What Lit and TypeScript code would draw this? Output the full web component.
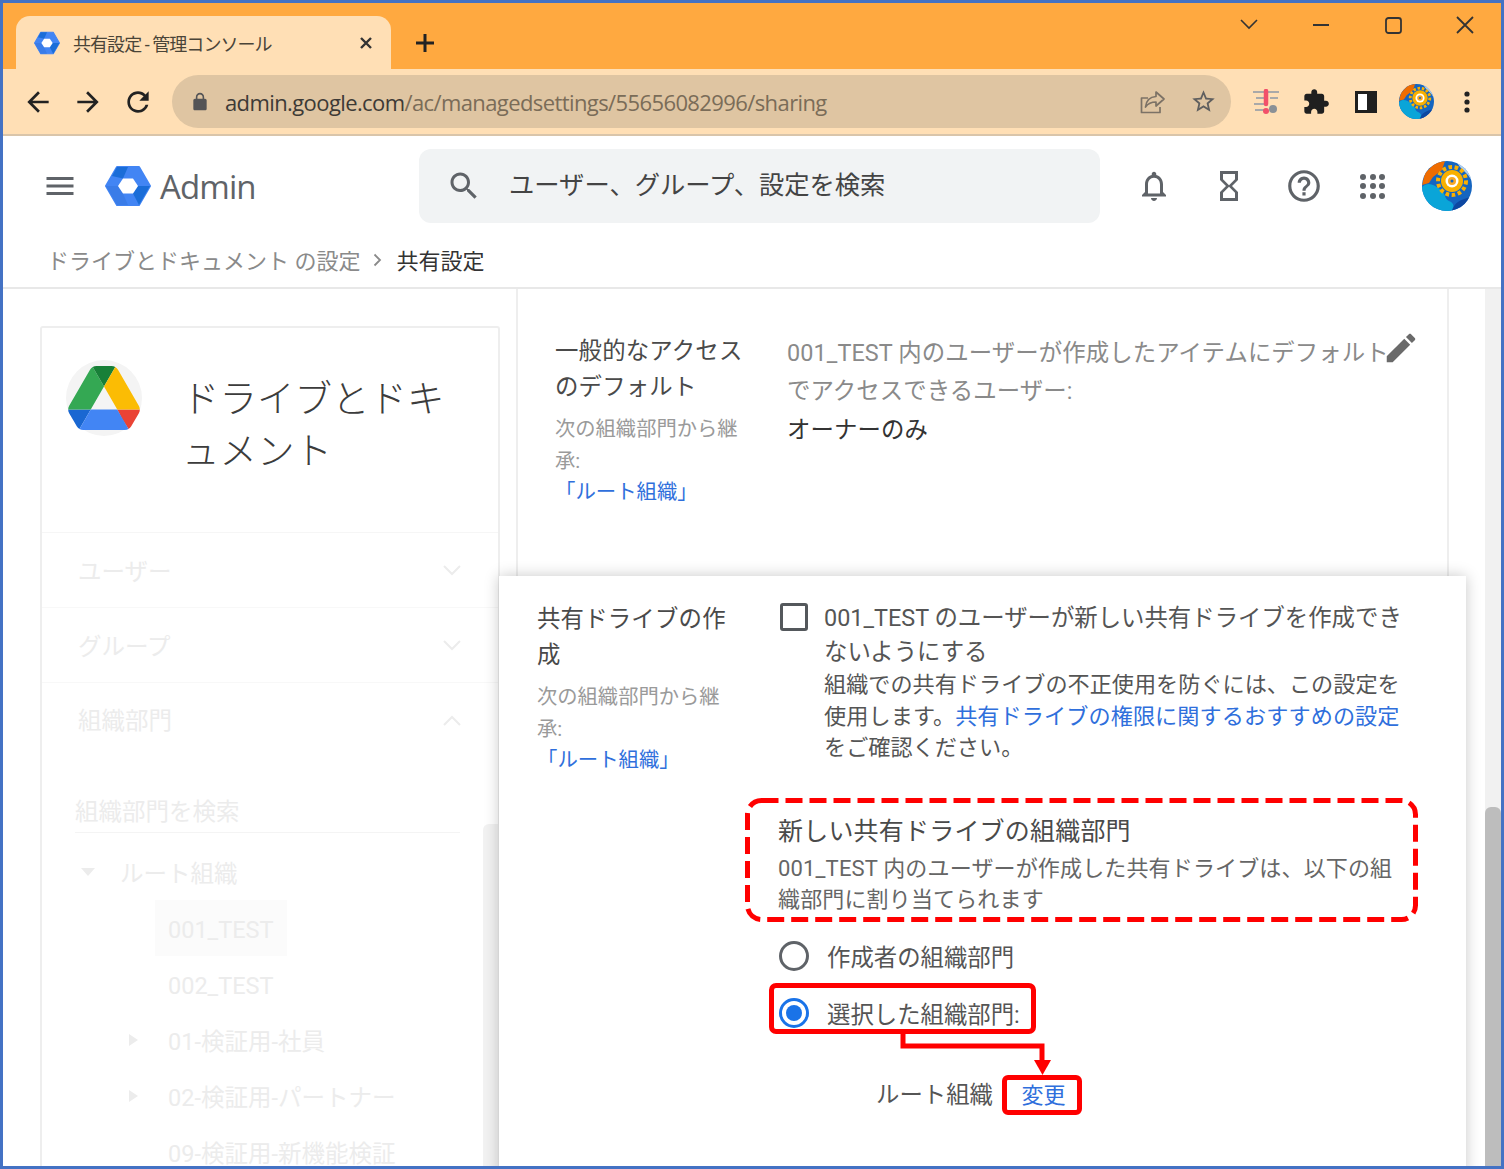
import { LitElement, html, css } from "lit";
import { customElement } from "lit/decorators.js";

const P = {
  back: "M20 11H7.83l5.59-5.59L12 4l-8 8 8 8 1.41-1.41L7.83 13H20v-2z",
  fwd: "M12 4l-1.41 1.41L16.17 11H4v2h12.17l-5.58 5.59L12 20l8-8z",
  reload: "M17.65 6.35C16.2 4.9 14.21 4 12 4c-4.42 0-7.99 3.58-7.99 8s3.57 8 7.99 8c3.73 0 6.84-2.55 7.73-6h-2.08c-.82 2.33-3.04 4-5.65 4-3.31 0-6-2.69-6-6s2.69-6 6-6c1.66 0 3.14.69 4.22 1.78L13 11h7V4l-2.35 2.35z",
  lock: "M18 8h-1V6c0-2.76-2.24-5-5-5S7 3.24 7 6v2H6c-1.1 0-2 .9-2 2v10c0 1.1.9 2 2 2h12c1.1 0 2-.9 2-2V10c0-1.1-.9-2-2-2zm-2.9 0H8.9V6c0-1.71 1.39-3.1 3.1-3.1 1.71 0 3.1 1.39 3.1 3.1v2z",
  star: "M22 9.24l-7.19-.62L12 2 9.19 8.63 2 9.24l5.46 4.73L5.82 21 12 17.27 18.18 21l-1.63-7.03L22 9.24zM12 15.4l-3.76 2.27 1-4.28-3.32-2.88 4.38-.38L12 6.1l1.71 4.04 4.38.38-3.32 2.88 1 4.28L12 15.4z",
  puzzle: "M20.5 11H19V7c0-1.1-.9-2-2-2h-4V3.5C13 2.12 11.88 1 10.5 1S8 2.12 8 3.5V5H4c-1.1 0-1.99.9-1.99 2v3.8H3.5c1.49 0 2.7 1.21 2.7 2.7s-1.21 2.7-2.7 2.7H2V20c0 1.1.9 2 2 2h3.8v-1.5c0-1.49 1.21-2.7 2.7-2.7 1.49 0 2.7 1.21 2.7 2.7V22H17c1.1 0 2-.9 2-2v-4h1.5c1.38 0 2.5-1.12 2.5-2.5S21.88 11 20.5 11z",
  search: "M15.5 14h-.79l-.28-.27C15.41 12.59 16 11.11 16 9.5 16 5.91 13.09 3 9.5 3S3 5.91 3 9.5 5.91 16 9.5 16c1.61 0 3.09-.59 4.23-1.57l.27.28v.79l5 4.99L20.49 19l-4.99-5zm-6 0C7.01 14 5 11.99 5 9.5S7.01 5 9.5 5 14 7.01 14 9.5 11.99 14 9.5 14z",
  bell: "M12 22c1.1 0 2-.9 2-2h-4c0 1.1.9 2 2 2zm6-6v-5c0-3.07-1.63-5.64-4.5-6.32V4c0-.83-.67-1.5-1.5-1.5s-1.5.67-1.5 1.5v.68C7.64 5.36 6 7.92 6 11v5l-2 2v1h16v-1l-2-2zm-2 1H8v-6c0-2.48 1.51-4.5 4-4.5s4 2.02 4 4.5v6z",
  hour: "M6 2v6h.01L6 8.01 10 12l-4 4 .01.01H6V22h12v-5.99h-.01L18 16l-4-4 4-3.99-.01-.01H18V2H6zm10 14.5V20H8v-3.5l4-4 4 4zm-4-5l-4-4V4h8v3.5l-4 4z",
  help: "M11 18h2v-2h-2v2zm1-16C6.48 2 2 6.48 2 12s4.48 10 10 10 10-4.48 10-10S17.52 2 12 2zm0 18c-4.41 0-8-3.59-8-8s3.59-8 8-8 8 3.59 8 8-3.59 8-8 8zm0-14c-2.21 0-4 1.79-4 4h2c0-1.1.9-2 2-2s2 .9 2 2c0 2-3 1.75-3 5h2c0-2.25 3-2.5 3-5 0-2.21-1.79-4-4-4z",
  edit: "M3 17.25V21h3.75L17.81 9.94l-3.75-3.75L3 17.25zM20.71 7.04c.39-.39.39-1.02 0-1.41l-2.34-2.34c-.39-.39-1.02-.39-1.41 0l-1.83 1.83 3.75 3.75 1.83-1.83z",
  menu: "M3 18h18v-2H3v2zm0-5h18v-2H3v2zm0-7v2h18V6H3z",
};

const icon = (d: string, size: number, color: string) => html`<svg width=${size} height=${size} viewBox="0 0 24 24" fill=${color}><path d=${d}></path></svg>`;

const hexagon = (w: number, h: number) => html`<svg width=${w} height=${h} viewBox="0 0 46 42">
  <polygon points="1,21 12,2 34,2 45,21 34,40 12,40" fill="#4285f4" stroke="#4285f4" stroke-width="2" stroke-linejoin="round"></polygon>
  <polygon points="12,2 23,2 18,13.500 7,11" fill="#1a6dd8"></polygon>
  <polygon points="33,21 45,21 34,40 28,28.500" fill="#1a6dd8"></polygon>
  <polygon points="1,21 12,40 23,40 18,28.500 13,21" fill="#3a7ce8"></polygon>
  <polygon points="18,13.500 28,13.500 33,21 28,28.500 18,28.500 13,21" fill="#fff"></polygon>
</svg>`;

const avatar = (s: number) => html`<svg width=${s} height=${s} viewBox="0 0 50 50">
  <defs><clipPath id="av"><circle cx="25" cy="25" r="25"></circle></clipPath></defs>
  <g clip-path="url(#av)">
    <rect width="50" height="50" fill="#1565c0"></rect>
    <path d="M0 26C6 20 12 24 18 28c6 4 4 10 9 12s6 6 2 10H0z" fill="#0aa5d8"></path>
    <path d="M0 24L3 12 14 1l9-1-3 9-9 7-4 6z" fill="#ef6c00"></path>
    <path d="M30 50c2-8 8-12 20-14v14z" fill="#0d47a1"></path>
    <path d="M34 0h16v20l-4-6-8-8z" fill="#e3f2fd" fill-opacity=".75"></path>
  </g>
  <circle cx="30" cy="20" r="14" fill="none" stroke="#fbb000" stroke-width="4" stroke-dasharray="3.6 2.6"></circle>
  <circle cx="30" cy="20" r="11" fill="#f9b000"></circle>
  <circle cx="30" cy="20" r="6.500" fill="#fff"></circle>
  <circle cx="30" cy="20" r="4" fill="#f9a825"></circle>
  <circle cx="30" cy="20" r="1.500" fill="#1565c0"></circle>
</svg>`;

const driveLogo = html`<svg width="72" height="64" viewBox="0 0 87.3 78">
  <path d="m6.6 66.85 3.85 6.65c.8 1.4 1.95 2.5 3.3 3.3l13.75-23.8h-27.5c0 1.55.4 3.1 1.2 4.5z" fill="#1967d2"></path>
  <path d="m43.65 25-13.75-23.8c-1.35.8-2.5 1.9-3.3 3.3l-25.4 44a9.06 9.06 0 0 0 -1.2 4.5h27.5z" fill="#34a853"></path>
  <path d="m73.55 76.8c1.35-.8 2.5-1.9 3.3-3.3l1.6-2.75 7.65-13.25c.8-1.4 1.2-2.95 1.2-4.5h-27.502l5.852 11.5z" fill="#ea4335"></path>
  <path d="m43.65 25 13.75-23.8c-1.35-.8-2.9-1.2-4.5-1.2h-18.5c-1.6 0-3.15.45-4.5 1.2z" fill="#188038"></path>
  <path d="m59.8 53h-32.3l-13.75 23.8c1.35.8 2.9 1.2 4.5 1.2h50.8c1.6 0 3.15-.45 4.5-1.2z" fill="#4285f4"></path>
  <path d="m73.4 26.5-12.7-22c-.8-1.4-1.95-2.5-3.3-3.3l-13.75 23.8 16.15 28h27.45c0-1.55-.4-3.1-1.2-4.5z" fill="#fbbc04"></path>
</svg>`;

const chev = (up: boolean) => html`<svg class="chev" width="20" height="12" viewBox="0 0 20 12"><path d=${up ? "M2 10l8-8 8 8" : "M2 2l8 8 8-8"} fill="none" stroke="#ececec" stroke-width="2"></path></svg>`;

const treeArrow = html`<svg class="arrow" width="42" height="14" viewBox="0 0 42 14" preserveAspectRatio="xMinYMid meet"><path d="M3 1l9 6-9 6z" fill="#ececec"></path></svg>`;

@customElement("app-root")
export class AppRoot extends LitElement {
  static styles = css`
    :host { display: flex; flex-direction: column; width: 1504px; height: 1169px; box-sizing: border-box; border: 3px solid #4472c4; overflow: hidden; background: #fff; font-family: Roboto, "Noto Sans CJK JP", sans-serif; color: #4a4a4a; }
    svg { display: block; flex: none; }
    .titlebar { height: 66px; flex: none; background: #ffa940; display: flex; align-items: flex-end; padding-left: 13px; }
    .tab { width: 375px; height: 53px; background: #ffdfb5; border-radius: 14px 14px 0 0; display: flex; align-items: center; padding-left: 18px; box-sizing: border-box; }
    .tab-title { margin-left: 13px; font-size: 18px; letter-spacing: -0.95px; color: #4a4438; width: 286px; white-space: nowrap; }
    .newtab { margin-left: 24px; height: 53px; display: flex; align-items: center; }
    .wincontrols { margin-left: auto; align-self: flex-start; display: flex; height: 44px; align-items: center; }
    .winbtn { width: 72px; display: flex; justify-content: center; }
    .toolbar { height: 67px; flex: none; box-sizing: border-box; background: #ffdfb5; border-bottom: 2px solid #d9c5aa; display: flex; align-items: center; padding-left: 10px; }
    .tbtn { width: 50px; display: flex; justify-content: center; align-items: center; flex: none; }
    .tbtn.dots { margin-left: 1px; }
    .omni { margin-left: 9px; margin-right: 10px; width: 1059px; height: 53px; flex: none; background: #dfc5a2; border-radius: 27px; display: flex; align-items: center; padding-left: 18px; box-sizing: border-box; }
    .url { margin-left: 15px; font-family: "Open Sans", sans-serif; font-size: 22px; letter-spacing: -0.6px; color: #7a6c58; white-space: nowrap; width: 900px; }
    .url b { font-weight: 400; color: #3d3a36; }
    .omni-end { margin-left: auto; display: flex; padding-right: 3px; }
    .header { height: 104px; flex: none; display: flex; align-items: center; padding-bottom: 4px; box-sizing: border-box; }
    .brand { width: 416px; flex: none; display: flex; align-items: center; padding-left: 39px; box-sizing: border-box; }
    .brand .logo { margin-left: 27px; }
    .admin { margin-left: 9px; font-size: 33px; color: #5f6368; font-family: "Open Sans", sans-serif; letter-spacing: -0.9px; }
    .search { width: 681px; height: 74px; flex: none; background: #f1f3f4; border-radius: 12px; display: flex; align-items: center; padding-left: 27px; box-sizing: border-box; font-size: 25.3px; color: #444; }
    .search span { margin-left: 27px; margin-top: -6px; }
    .hicons { margin-left: 16px; display: flex; align-items: center; }
    .hbtn { width: 75px; display: flex; justify-content: center; }
    .hbtn.grid { width: 63px; }
    .grid-dots { display: grid; grid-template-columns: repeat(3, 6px); gap: 3.5px; }
    .grid-dots i { width: 6px; height: 6px; border-radius: 50%; background: #5f6368; display: block; }
    .hav { margin-left: 18px; }
    .crumbs { height: 49px; flex: none; box-sizing: border-box; border-bottom: 2px solid #e8e8e8; display: flex; align-items: center; padding-left: 44px; padding-bottom: 9px; font-size: 22px; color: #8a8a8a; white-space: nowrap; }
    .crumbs .sep { margin: 2px 14px 0 13px; }
    .crumbs .cur { color: #333; }
    .content { flex: 1; min-height: 0; position: relative; display: flex; overflow: hidden; }
    .sidecard { margin-left: 37px; margin-top: 37px; width: 460px; flex: none; box-sizing: border-box; border: 2px solid #eeeeee; border-bottom: 0; border-radius: 3px 3px 0 0; position: relative; overflow: hidden; }
    .side-head { height: 205px; box-sizing: border-box; border-bottom: 1px solid #f6f6f6; display: flex; }
    .logo-circle { width: 76px; height: 76px; margin: 32px 0 0 24px; border-radius: 50%; background: #f4f4f4; display: flex; align-items: center; justify-content: center; flex: none; }
    .side-title { margin: 45px 0 0 40px; font-size: 37.5px; line-height: 52px; color: #3c3c3c; white-space: nowrap; font-weight: 300; }
    .side-row { height: 75px; box-sizing: border-box; border-bottom: 1px solid #f8f8f8; display: flex; align-items: center; justify-content: space-between; padding: 0 36px; font-size: 23.5px; color: #ececec; }
    .side-row.open { border-bottom: 0; }
    .side-row.open span { margin-top: -3px; }
    .side-search { margin: 37px 38px 0 33px; height: 37px; border-bottom: 1px solid #f4f4f4; font-size: 23.5px; line-height: 34px; color: #ececec; }
    .tree { margin-top: 11px; font-size: 23.5px; color: #ececec; }
    .tree-row { height: 56px; box-sizing: border-box; display: flex; align-items: center; padding-left: 126px; white-space: nowrap; }
    .tree-row.root { padding-left: 38px; }
    .tree-row.latin { padding-top: 4px; }
    .tree-row.has-sel { padding-top: 0; }
    .tree-row .arrow { width: 42px; flex: none; margin-left: -42px; }
    .tree-row.root .arrow { margin-left: 0; width: 40px; }
    .sel { margin-left: -13px; padding: 4px 13px 0; box-sizing: border-box; background: #fbfbfb; height: 56px; display: flex; align-items: center; }
    .side-scroll { position: absolute; right: 0; top: 496px; bottom: 0; width: 15px; background: #f2f2f2; border-radius: 6px 0 0 0; }
    .maincard { margin-left: 16px; width: 933px; flex: none; box-sizing: border-box; border-left: 2px solid #eeeeee; border-right: 2px solid #eeeeee; position: relative; padding: 44px 0 0 37px; display: flex; align-items: flex-start; }
    .label { width: 232px; flex: none; font-size: 23.4px; line-height: 36px; color: #4a4a4a; letter-spacing: .2px; white-space: nowrap; }
    .inherit { font-size: 20.3px; line-height: 31.5px; color: #9a9a9a; margin-top: 9px; letter-spacing: 0; }
    .org { font-size: 20.400px; line-height: 31.5px; color: #3f74d8; letter-spacing: 0; }
    .desc { font-size: 23.4px; line-height: 38px; color: #8a8a8a; padding-top: 1px; letter-spacing: .1px; }
    .desc .owner { color: #333; margin-top: 1px; }
    .edit { position: absolute; left: 864px; top: 40px; }
    .scrollbar { position: absolute; right: 0; top: 0; bottom: 0; width: 16px; background: #f1f1f1; display: flex; flex-direction: column; padding-top: 518px; box-sizing: border-box; }
    .thumb { flex: 1; background: #bdbdbd; border-radius: 6px 6px 0 0; }
    .panel { position: absolute; left: 496px; top: 287px; width: 967px; bottom: -10px; background: #fff; box-shadow: 0 0 14px rgba(0,0,0,.22); padding: 25px 0 0 38px; box-sizing: border-box; display: flex; align-items: flex-start; }
    .panel .label { width: 243px; }
    .pright { width: 640px; flex: none; }
    .optline { display: flex; align-items: flex-start; }
    .check { width: 22px; height: 22px; margin-top: 2px; border: 3px solid #54585c; border-radius: 3px; flex: none; }
    .opttext { margin-left: 16px; color: #555; white-space: nowrap; }
    .opttext .l1 { font-size: 23.4px; line-height: 34px; }
    .opttext .l2 { font-size: 22.15px; line-height: 31.6px; }
    .opttext .l2.tight { letter-spacing: .08px; }
    a { color: #2f6fdc; text-decoration: none; }
    .dashed { position: relative; margin-top: 34px; margin-left: -35px; width: 673px; height: 124px; box-sizing: border-box; padding: 18px 0 0 33px; white-space: nowrap; }
    .dash-frame { position: absolute; left: 0; top: 0; }
    .dashed .t { font-size: 25px; line-height: 32px; color: #4a4a4a; letter-spacing: .2px; }
    .dashed .b { font-size: 22px; line-height: 31px; color: #666; margin-top: 5px; letter-spacing: .15px; }
    .radio-row { display: flex; align-items: center; height: 50px; margin-top: 9px; margin-left: -1px; font-size: 23.4px; color: #555; }
    .radio { width: 30px; height: 30px; box-sizing: border-box; border: 3px solid #5f6368; border-radius: 50%; flex: none; margin-right: 18px; display: flex; align-items: center; justify-content: center; }
    .radio.on { border-color: #1a73e8; }
    .radio.on i { width: 16px; height: 16px; border-radius: 50%; background: #1a73e8; display: block; }
    .redbox { margin-top: 2px; margin-left: -11px; width: 267px; height: 51px; box-sizing: border-box; border: 5px solid #f00; border-radius: 7px; display: flex; align-items: center; padding: 9px 0 0 5px; font-size: 23.4px; color: #555; white-space: nowrap; }
    .rootline { margin-top: 41px; margin-left: 96px; display: flex; align-items: center; font-size: 23.4px; color: #555; }
    .rootline span { margin-top: -3px; }
    .chg { margin-left: 9px; width: 80px; height: 40px; box-sizing: border-box; border: 5px solid #f00; border-radius: 6px; display: flex; align-items: center; justify-content: center; font-size: 22px; color: #2f6fdc; padding: 0 0 3px 3px; }
    .connector { position: absolute; left: 400px; top: 458px; }
  `;

  render() {
    return html`
      <div class="titlebar">
        <div class="tab">
          ${hexagon(26, 24)}
          <div class="tab-title">共有設定 - 管理コンソール</div>
          <svg width="14" height="14" viewBox="0 0 14 14"><path d="M2 2l10 10M12 2L2 12" stroke="#333" stroke-width="2.4"></path></svg>
        </div>
        <div class="newtab"><svg width="20" height="20" viewBox="0 0 20 20"><path d="M10 1v18M1 10h18" stroke="#222" stroke-width="3"></path></svg></div>
        <div class="wincontrols">
          <div class="winbtn"><svg width="18" height="12" viewBox="0 0 18 12"><path d="M1 1l8 8 8-8" fill="none" stroke="#333" stroke-width="1.6"></path></svg></div>
          <div class="winbtn"><svg width="16" height="4" viewBox="0 0 16 4"><path d="M0 2h16" stroke="#333" stroke-width="2"></path></svg></div>
          <div class="winbtn"><svg width="17" height="17" viewBox="0 0 17 17"><rect x="1" y="1" width="15" height="15" rx="2.5" fill="none" stroke="#333" stroke-width="1.8"></rect></svg></div>
          <div class="winbtn"><svg width="18" height="18" viewBox="0 0 18 18"><path d="M1 1l16 16M17 1L1 17" stroke="#333" stroke-width="1.8"></path></svg></div>
        </div>
      </div>
      <div class="toolbar">
        <div class="tbtn">${icon(P.back, 32, "#222")}</div>
        <div class="tbtn">${icon(P.fwd, 32, "#222")}</div>
        <div class="tbtn">${icon(P.reload, 32, "#222")}</div>
        <div class="omni">
          ${icon(P.lock, 20, "#545456")}
          <div class="url"><b>admin.google.com</b>/ac/managedsettings/55656082996/sharing</div>
          <div class="omni-end">
            <div class="tbtn"><svg width="26" height="24" viewBox="0 0 26 24" fill="none" stroke="#7c7266" stroke-width="1.7" stroke-linejoin="round"><path d="M8 8H1.500v14.500h18.500V17"></path><path d="M16 2l8 7-8 7v-4c-5 0-8 1.500-10.500 5 .6-6 4-10 10.500-10.500z"></path></svg></div>
            <div class="tbtn">${icon(P.star, 27, "#5f5f5f")}</div>
          </div>
        </div>
        <div class="tbtn">
          <svg width="28" height="26" viewBox="0 0 28 26"><path d="M1 3h26M4 9h8M18 9h8M2 15h10M3 21h9" stroke="#a9a9a9" stroke-width="2"></path><path d="M14 2v13" stroke="#f2506a" stroke-width="4.5" stroke-linecap="round"></path><circle cx="14" cy="22" r="3" fill="#f2506a"></circle><circle cx="21" cy="20" r="4" fill="#8a9096"></circle></svg>
        </div>
        <div class="tbtn">${icon(P.puzzle, 28, "#1f1f1f")}</div>
        <div class="tbtn"><svg width="22" height="22" viewBox="0 0 22 22"><rect x="1.500" y="1.500" width="19" height="19" fill="#fff" stroke="#1f1f1f" stroke-width="3"></rect><rect x="12" y="2" width="8" height="18" fill="#1f1f1f"></rect></svg></div>
        <div class="tbtn">${avatar(35)}</div>
        <div class="tbtn dots"><svg width="6" height="22" viewBox="0 0 6 22"><circle cx="3" cy="3" r="2.600" fill="#222"></circle><circle cx="3" cy="11" r="2.600" fill="#222"></circle><circle cx="3" cy="19" r="2.600" fill="#222"></circle></svg></div>
      </div>
      <div class="header">
        <div class="brand">
          ${icon(P.menu, 36, "#5f6368")}
          <div class="logo">${hexagon(46, 42)}</div>
          <div class="admin">Admin</div>
        </div>
        <div class="search">${icon(P.search, 36, "#5f6368")}<span>ユーザー、グループ、設定を検索</span></div>
        <div class="hicons">
          <div class="hbtn">${icon(P.bell, 36, "#5f6368")}</div>
          <div class="hbtn">${icon(P.hour, 36, "#5f6368")}</div>
          <div class="hbtn">${icon(P.help, 38, "#5f6368")}</div>
          <div class="hbtn grid"><div class="grid-dots">${Array.from({ length: 9 }, () => html`<i></i>`)}</div></div>
          <div class="hav">${avatar(50)}</div>
        </div>
      </div>
      <div class="crumbs"><span>ドライブとドキュメント の設定</span><svg class="sep" width="9" height="14" viewBox="0 0 9 14"><path d="M1.500 1.500L7 7l-5.500 5.500" fill="none" stroke="#8a8a8a" stroke-width="1.800"></path></svg><span class="cur">共有設定</span></div>
      <div class="content">
        <div class="sidecard">
          <div class="side-head">
            <div class="logo-circle">${driveLogo}</div>
            <div class="side-title">ドライブとドキ<br />ュメント</div>
          </div>
          <div class="side-row"><span>ユーザー</span>${chev(false)}</div>
          <div class="side-row"><span>グループ</span>${chev(false)}</div>
          <div class="side-row open"><span>組織部門</span>${chev(true)}</div>
          <div class="side-search">組織部門を検索</div>
          <div class="tree">
            <div class="tree-row root"><svg class="arrow" width="40" height="10" viewBox="0 0 40 10" preserveAspectRatio="xMinYMid meet"><path d="M1 1h14l-7 8z" fill="#ececec"></path></svg>ルート組織</div>
            <div class="tree-row has-sel"><span class="sel">001_TEST</span></div>
            <div class="tree-row latin">002_TEST</div>
            <div class="tree-row">${treeArrow}01-検証用-社員</div>
            <div class="tree-row">${treeArrow}02-検証用-パートナー</div>
            <div class="tree-row">09-検証用-新機能検証</div>
          </div>
          <div class="side-scroll"></div>
        </div>
        <div class="maincard">
          <div class="label">
            一般的なアクセス<br />のデフォルト
            <div class="inherit">次の組織部門から継<br />承:</div>
            <div class="org"><a>「ルート組織」</a></div>
          </div>
          <div class="desc">
            001_TEST 内のユーザーが作成したアイテムにデフォルト<br />でアクセスできるユーザー:
            <div class="owner">オーナーのみ</div>
          </div>
          <div class="edit">${icon(P.edit, 38, "#6a6a6a")}</div>
        </div>
        <div class="scrollbar"><div class="thumb"></div></div>
        <div class="panel">
          <div class="label">
            共有ドライブの作<br />成
            <div class="inherit">次の組織部門から継<br />承:</div>
            <div class="org"><a>「ルート組織」</a></div>
          </div>
          <div class="pright">
            <div class="optline">
              <div class="check"></div>
              <div class="opttext">
                <div class="l1">001_TEST のユーザーが新しい共有ドライブを作成でき</div>
                <div class="l1">ないようにする</div>
                <div class="l2">組織での共有ドライブの不正使用を防ぐには、この設定を</div>
                <div class="l2 tight">使用します。<a>共有ドライブの権限に関するおすすめの設定</a></div>
                <div class="l2">をご確認ください。</div>
              </div>
            </div>
            <div class="dashed">
              <svg class="dash-frame" width="673" height="124" viewBox="0 0 673 124"><rect x="2.500" y="2.500" width="668" height="119" rx="14" fill="none" stroke="#f00" stroke-width="5" stroke-dasharray="17 7"></rect></svg>
              <div class="t">新しい共有ドライブの組織部門</div>
              <div class="b">001_TEST 内のユーザーが作成した共有ドライブは、以下の組<br />織部門に割り当てられます</div>
            </div>
            <div class="radio-row"><div class="radio"></div>作成者の組織部門</div>
            <div class="redbox"><div class="radio on"><i></i></div>選択した組織部門:</div>
            <div class="rootline"><span>ルート組織</span><div class="chg">変更</div></div>
          </div>
          <svg class="connector" width="160" height="44" viewBox="0 0 160 44">
            <path d="M4 0v12h139v16" fill="none" stroke="#f00" stroke-width="5"></path>
            <path d="M135 26h17l-8.500 15z" fill="#f00"></path>
          </svg>
        </div>
      </div>
    `;
  }
}
